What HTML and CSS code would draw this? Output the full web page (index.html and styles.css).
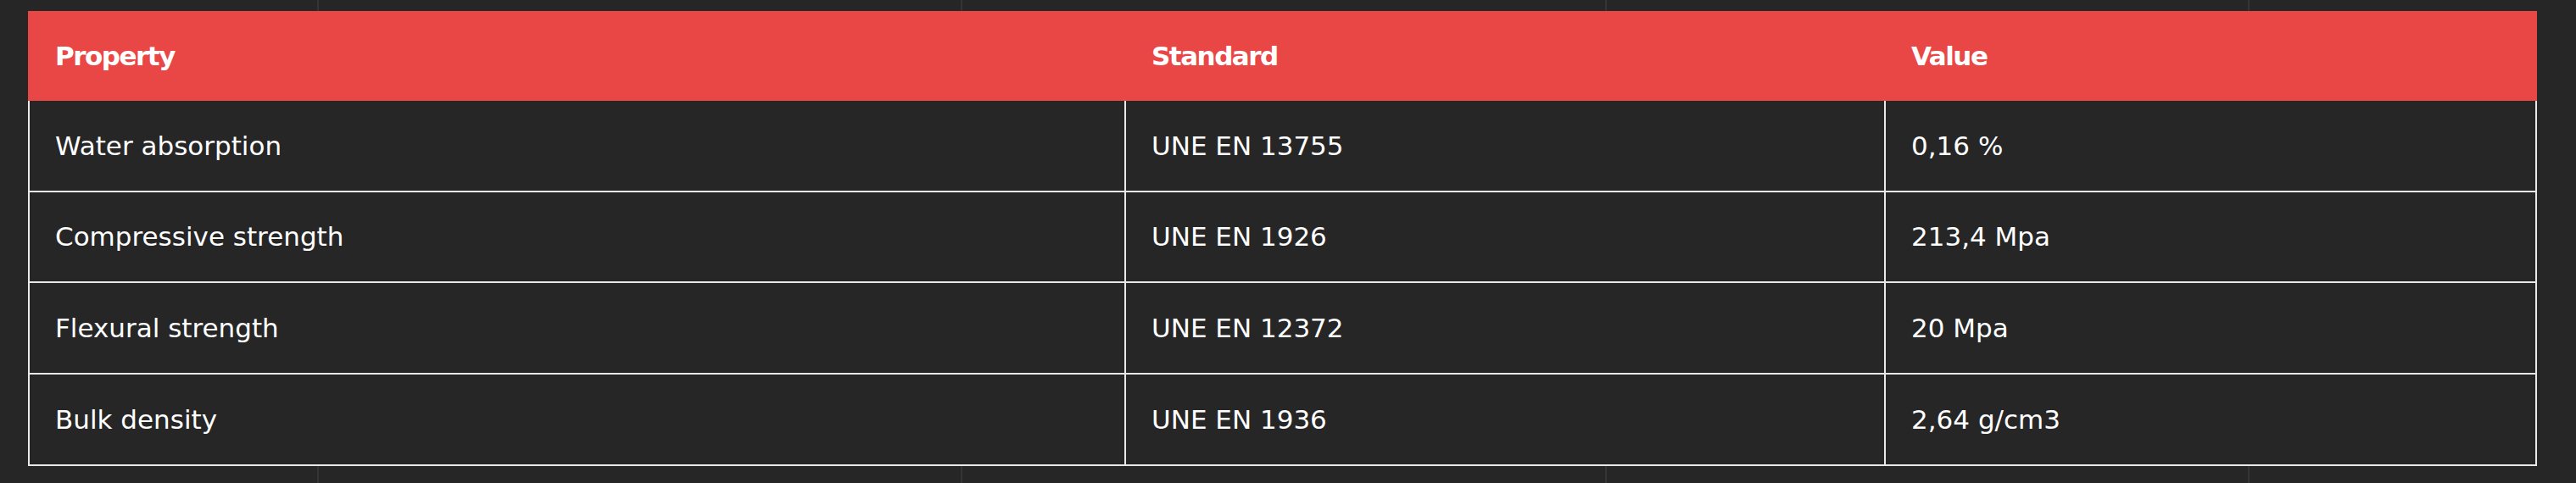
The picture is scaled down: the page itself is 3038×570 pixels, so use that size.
FILE: index.html
```html
<!DOCTYPE html>
<html lang="en">
<head>
<meta charset="utf-8">
<title>Properties</title>
<link rel="stylesheet" href="styles.css">
</head>
<body>
<div class="page">
  <table class="specs">
    <colgroup>
      <col class="c1">
      <col class="c2">
      <col class="c3">
    </colgroup>
    <thead>
      <tr>
        <th>Property</th>
        <th>Standard</th>
        <th>Value</th>
      </tr>
    </thead>
    <tbody>
      <tr><td>Water absorption</td><td>UNE EN 13755</td><td>0,16 %</td></tr>
      <tr><td>Compressive strength</td><td>UNE EN 1926</td><td>213,4 Mpa</td></tr>
      <tr><td>Flexural strength</td><td>UNE EN 12372</td><td>20 Mpa</td></tr>
      <tr><td>Bulk density</td><td>UNE EN 1936</td><td>2,64 g/cm3</td></tr>
    </tbody>
  </table>
</div>
</body>
</html>
```
FILE: styles.css
```css
html, body {
  margin: 0;
  padding: 0;
}
body {
  background-color: #262626;
  background-image: linear-gradient(to right,
    transparent 374px, #343434 374px, #343434 376px, transparent 376px,
    transparent 1133px, #343434 1133px, #343434 1135px, transparent 1135px,
    transparent 1893px, #343434 1893px, #343434 1895px, transparent 1895px,
    transparent 2651px, #343434 2651px, #343434 2653px, transparent 2653px);
  min-height: 570px;
  font-family: "DejaVu Sans", "Liberation Sans", sans-serif;
  color: #ffffff;
}
.page {
  padding: 13px 0 0 33px;
}
.specs {
  width: 2959px;
  table-layout: fixed;
  border-collapse: separate;
  border-spacing: 0;
}
.c1 { width: 1295px; }
.c2 { width: 896px; }
.c3 { width: 768px; }
.specs th,
.specs td {
  box-sizing: border-box;
  padding: 0 30px;
  text-align: left;
  vertical-align: middle;
  white-space: nowrap;
}
.specs th {
  height: 106px;
  background: #e94745;
  font-weight: bold;
  font-size: 31px;
  letter-spacing: -1.5px;
  border-left: 2px solid #e94745;
  border-right: 2px solid #e94745;
}
.specs th + th {
  border-left: 0;
}
.specs td {
  height: 107.67px;
  background: #262626;
  font-size: 31px;
  font-weight: normal;
  border-right: 2px solid #e8e8e8;
  border-bottom: 2px solid #e8e8e8;
}
.specs td:first-child {
  border-left: 2px solid #e8e8e8;
}
```
